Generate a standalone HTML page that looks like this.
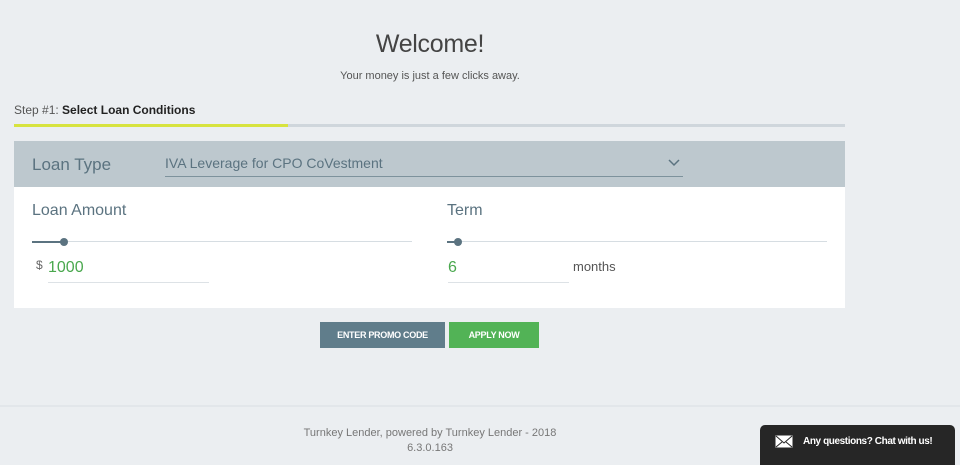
<!DOCTYPE html>
<html><head><style>
body{margin:0;width:960px;height:459px;background:#ebeef1;font-family:"Liberation Sans",sans-serif;position:relative;overflow:hidden}
.a{position:absolute}
</style></head><body>
<div class="a" style="left:0;top:30px;width:860px;text-align:center;font-size:25px;color:#444;letter-spacing:-0.3px">Welcome!</div>
<div class="a" style="left:0;top:70px;width:860px;text-align:center;font-size:11px;color:#555">Your money is just a few clicks away.</div>
<div class="a" style="left:14px;top:103px;font-size:12px;color:#555">Step #1: <b style="color:#222">Select Loan Conditions</b></div>
<div class="a" style="left:14px;top:124px;width:831px;height:3px;background:#cfd6dc"></div>
<div class="a" style="left:14px;top:124px;width:274px;height:3px;background:#d7e33f"></div>
<div class="a" style="left:14px;top:141px;width:831px;height:46px;background:#bdc8ce"></div>
<div class="a" style="left:32px;top:155px;font-size:17px;color:#5b7380">Loan Type</div>
<div class="a" style="left:165px;top:155px;font-size:14px;color:#5b7380">IVA Leverage for CPO CoVestment</div>
<div class="a" style="left:165px;top:176px;width:518px;height:1px;background:#7d929c"></div>
<svg class="a" style="left:668px;top:158px" width="12" height="10"><path d="M1 2l5 5 5-5" stroke="#5b7380" stroke-width="1.5" fill="none"/></svg>
<div class="a" style="left:14px;top:187px;width:831px;height:121px;background:#fff"></div>
<div class="a" style="left:32px;top:202px;font-size:16px;color:#5b7380">Loan Amount</div>
<div class="a" style="left:447px;top:202px;font-size:16px;color:#5b7380">Term</div>
<div class="a" style="left:32px;top:241px;width:380px;height:1px;background:#d6dde2"></div>
<div class="a" style="left:32px;top:241px;width:32px;height:2px;background:#5b7380"></div>
<div class="a" style="left:60px;top:238px;width:8px;height:8px;border-radius:50%;background:#5b7380"></div>
<div class="a" style="left:447px;top:241px;width:380px;height:1px;background:#d6dde2"></div>
<div class="a" style="left:447px;top:241px;width:10px;height:2px;background:#5b7380"></div>
<div class="a" style="left:454px;top:238px;width:8px;height:8px;border-radius:50%;background:#5b7380"></div>
<div class="a" style="left:36px;top:258px;font-size:12px;color:#666">$</div>
<div class="a" style="left:48px;top:259px;font-size:16px;color:#4aa84e">1000</div>
<div class="a" style="left:48px;top:282px;width:161px;height:1px;background:#dde2e6"></div>
<div class="a" style="left:448px;top:259px;font-size:16px;color:#4aa84e">6</div>
<div class="a" style="left:448px;top:282px;width:121px;height:1px;background:#dde2e6"></div>
<div class="a" style="left:573px;top:259px;font-size:13px;color:#555">months</div>
<div class="a" style="left:320px;top:322px;width:125px;height:26px;background:#607d8b;color:#fff;font-size:9px;font-weight:bold;text-align:center;line-height:26px;letter-spacing:-0.3px">ENTER PROMO CODE</div>
<div class="a" style="left:449px;top:322px;width:90px;height:26px;background:#52b356;color:#fff;font-size:9px;font-weight:bold;text-align:center;line-height:26px;letter-spacing:-0.3px">APPLY NOW</div>
<div class="a" style="left:0;top:405px;width:960px;height:2px;background:#e2e6ea"></div>
<div class="a" style="left:0;top:426px;width:860px;text-align:center;font-size:11px;color:#777;line-height:15px">Turnkey Lender, powered by Turnkey Lender - 2018<br>6.3.0.163</div>
<div class="a" style="left:760px;top:425px;width:195px;height:40px;background:#262626;border-radius:5px 5px 0 0"></div>
<svg class="a" style="left:775px;top:435px" width="18" height="13"><rect x=".5" y=".5" width="17" height="12" fill="#fff"/><path d="M1 1l8 7 8-7M1 12l6-5M17 12l-6-5" stroke="#262626" fill="none"/></svg>
<div class="a" style="left:803px;top:436px;font-size:10px;font-weight:bold;color:#fff;letter-spacing:-0.4px;white-space:nowrap">Any questions? Chat with us!</div>
</body></html>
